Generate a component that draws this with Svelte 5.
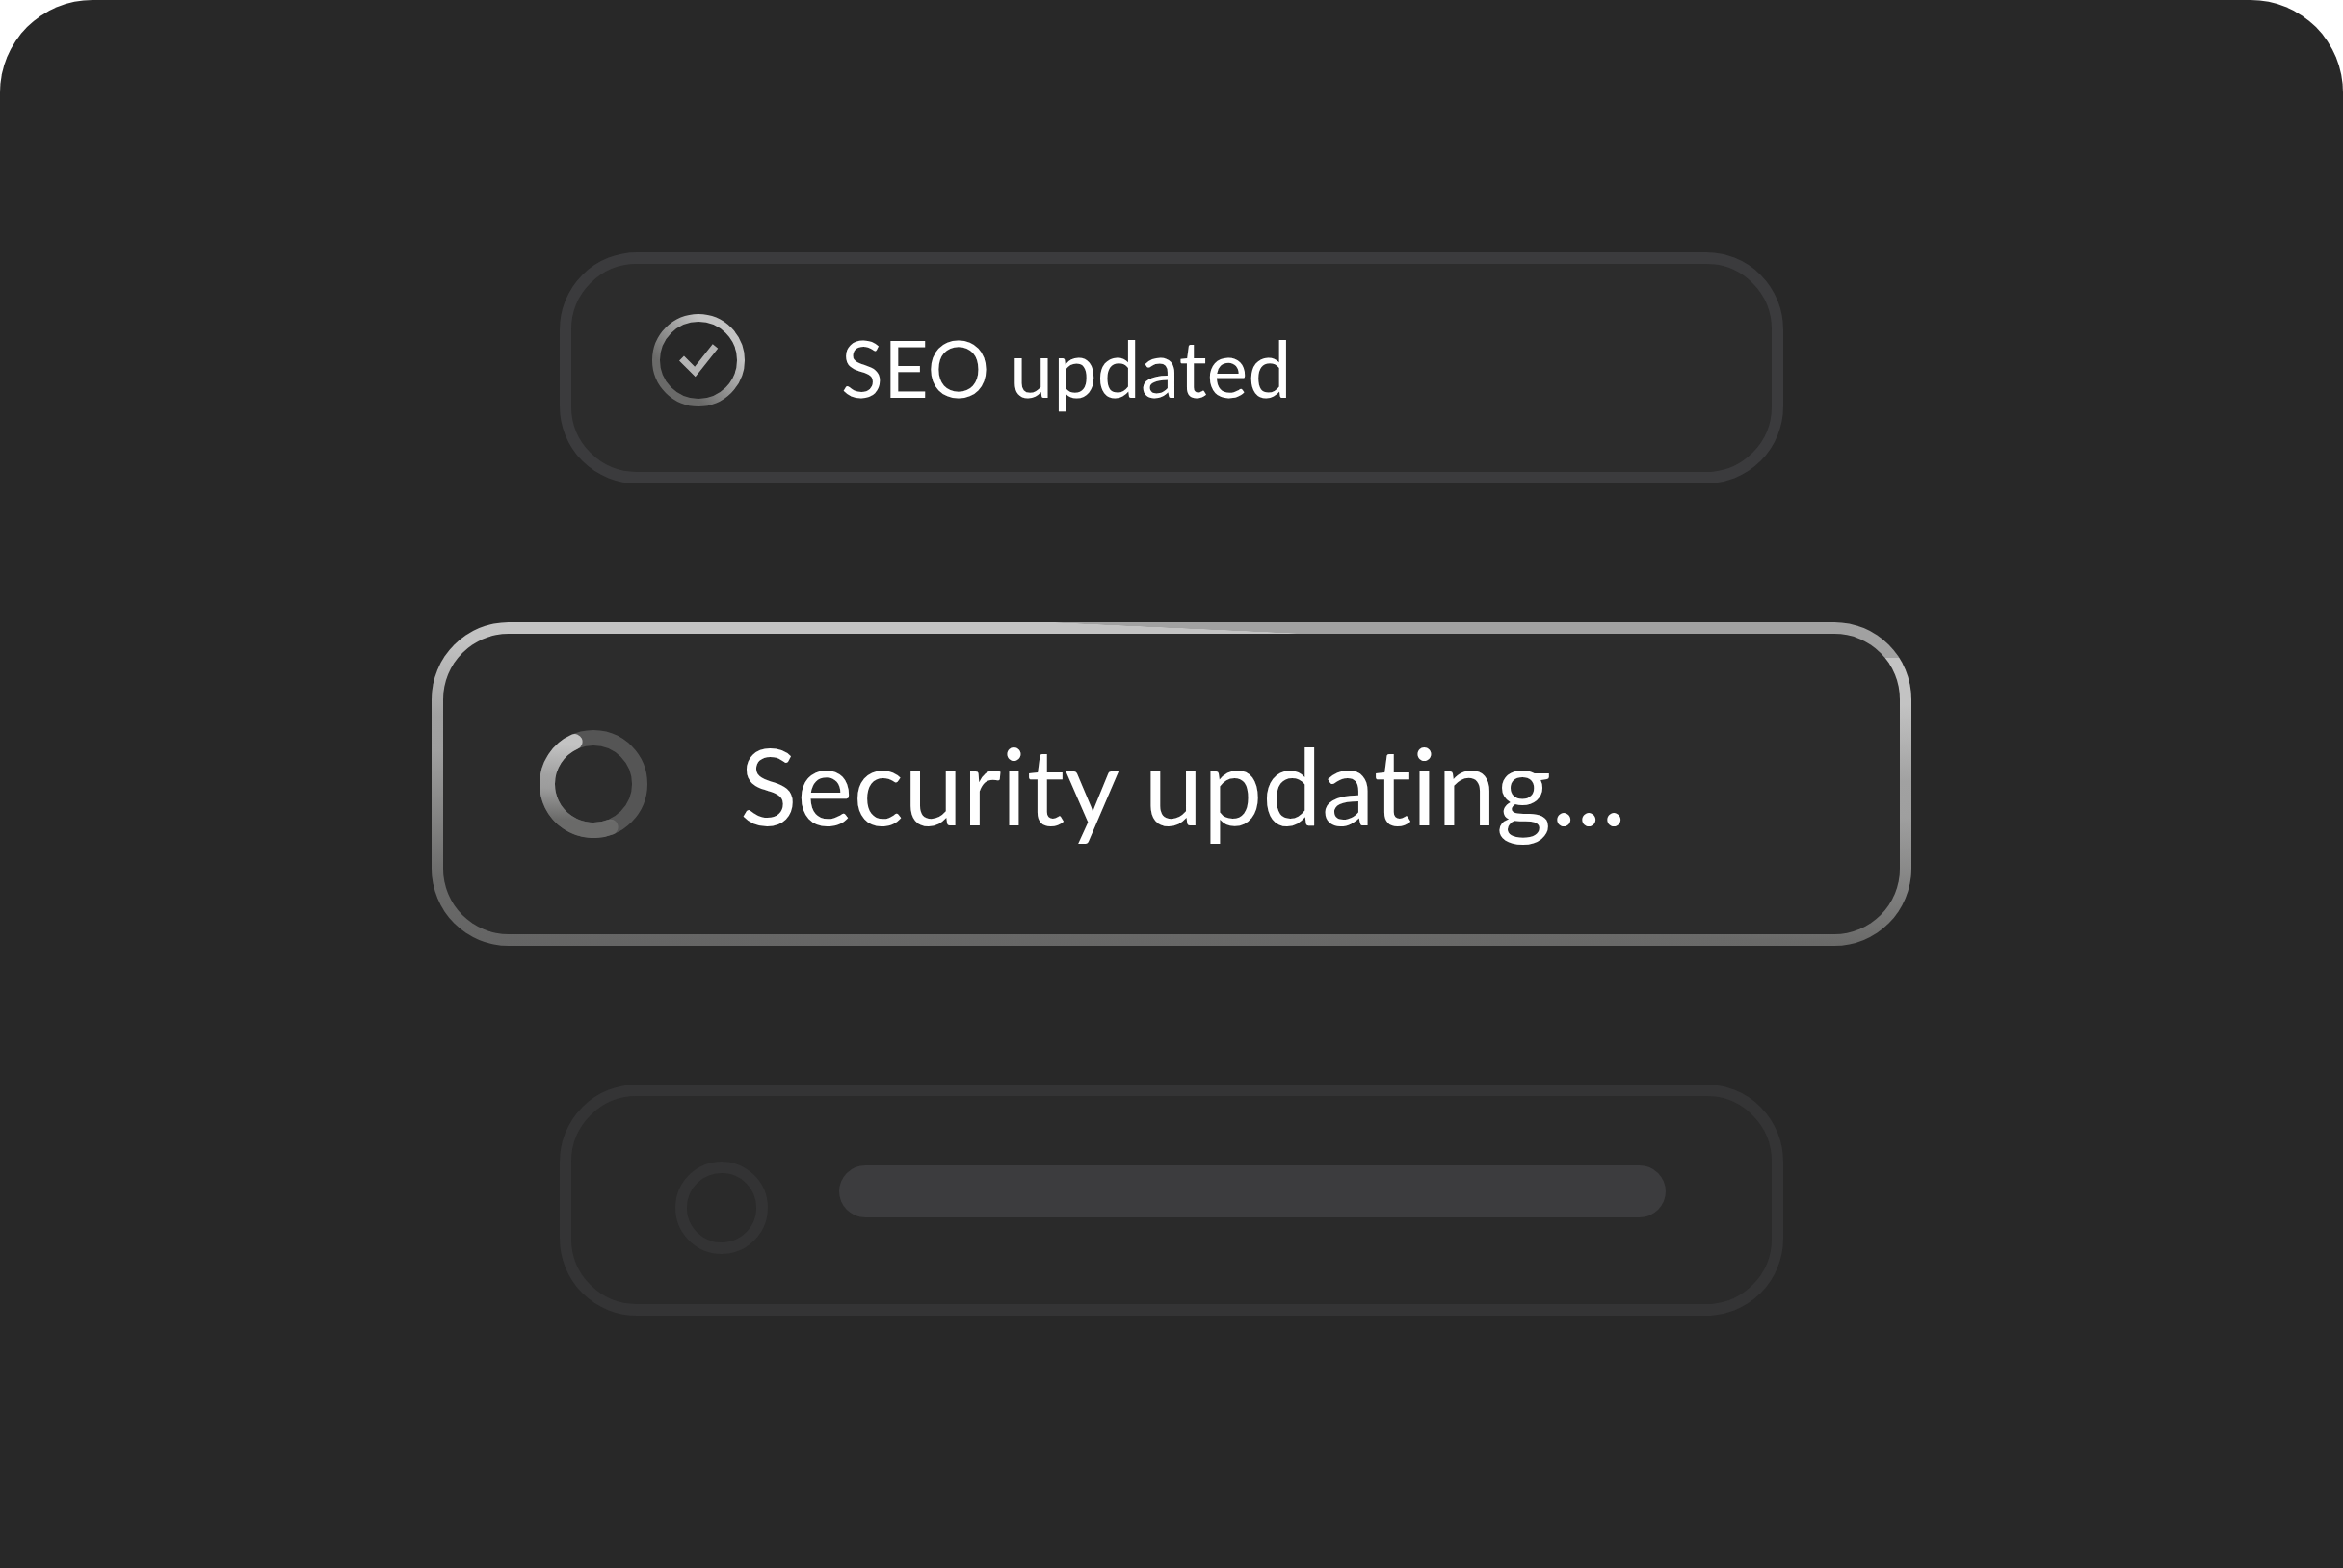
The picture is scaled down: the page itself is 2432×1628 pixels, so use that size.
<script lang="ts">
  type Status = 'done' | 'running' | 'pending'

  interface Task {
    label: string
    status: Status
  }

  export let tasks: Task[] = [
    { label: 'SEO updated', status: 'done' },
    { label: 'Security updating...', status: 'running' },
    { label: '', status: 'pending' }
  ]
</script>

<main class="panel">
  <ul class="tasks">
    {#each tasks as task}
      <li class="task {task.status}">
        {#if task.status === 'done'}
          <svg class="icon" viewBox="0 0 96 96" aria-hidden="true">
            <defs>
              <linearGradient id="done-ring" x1="0.1" y1="0.9" x2="0.9" y2="0.1">
                <stop offset="0.2" stop-color="#6a6a69" />
                <stop offset="0.82" stop-color="#c3c3c3" />
              </linearGradient>
            </defs>
            <circle cx="48" cy="48" r="44" fill="#282828" stroke="url(#done-ring)" stroke-width="8" />
            <path d="M30.5 46 L44.5 60 L65.5 33.5" fill="none" stroke="#b4b4b4" stroke-width="7" />
          </svg>
        {:else if task.status === 'running'}
          <svg class="icon" viewBox="0 0 112 112" aria-hidden="true">
            <defs>
              <linearGradient id="spinner-arc" gradientUnits="userSpaceOnUse" x1="52" y1="8" x2="48" y2="104">
                <stop offset="0.08" stop-color="#c3c3c3" />
                <stop offset="0.42" stop-color="#a1a1a1" />
                <stop offset="0.56" stop-color="#9c9c9c" />
                <stop offset="0.9" stop-color="#6a6a69" />
              </linearGradient>
            </defs>
            <circle cx="56" cy="56" r="48" fill="none" stroke="#555555" stroke-width="16" />
            <path
              d="M36.6 12.1 A48 48 0 0 0 8 56 A48 48 0 0 0 73.6 100.7"
              fill="none"
              stroke="url(#spinner-arc)"
              stroke-width="16"
              stroke-linecap="round"
            />
          </svg>
        {:else}
          <span class="empty-ring"></span>
        {/if}

        {#if task.label}
          <span class="label">{task.label}</span>
        {:else}
          <span class="placeholder"></span>
        {/if}
      </li>
    {/each}
  </ul>
</main>

<style>
  :global(body) {
    margin: 0;
    background: #ffffff;
  }

  .panel {
    box-sizing: border-box;
    display: flex;
    flex-direction: column;
    justify-content: center;
    min-height: 100vh;
    background: #282828;
    border-radius: 96px 96px 0 0;
  }

  .tasks {
    display: flex;
    flex-direction: column;
    align-items: center;
    gap: 144px;
    margin: 0;
    padding: 0;
    list-style: none;
  }

  .task {
    box-sizing: border-box;
    display: flex;
    align-items: center;
    width: 53%;
    max-width: 1270px;
    min-height: 240px;
    border: 12px solid #3b3b3d;
    border-radius: 80px;
    background: #2c2c2c;
    color: #ffffff;
    font-family: Lato, 'Open Sans', sans-serif;
    font-size: 81px;
    font-variant-ligatures: none;
  }

  .done {
    gap: 100px;
    padding: 0 84px;
  }

  .running {
    gap: 96px;
    width: 64%;
    max-width: 1536px;
    min-height: 336px;
    padding: 0 100px;
    border-color: transparent;
    background:
      linear-gradient(#2c2c2c, #2c2c2c) padding-box,
      linear-gradient(2.6deg, transparent 47.5%, #a1a1a1 48%) top right / 58.5% 37px no-repeat border-box,
      linear-gradient(182.6deg, #c3c3c3 21%, #a1a1a1 41%, #9f9f9f 50%, #6a6a69 83%, #646464 100%) border-box;
    font-size: 110px;
  }

  .pending {
    gap: 74px;
    padding: 0 110px 0 108px;
    border-color: #343435;
    background: #2a2a2a;
  }

  .icon {
    flex: none;
    width: 112px;
    height: 112px;
  }

  .done .icon {
    width: 96px;
    height: 96px;
    margin-bottom: 16px;
  }

  .label {
    line-height: 120%;
    white-space: nowrap;
  }

  .empty-ring {
    box-sizing: border-box;
    flex: none;
    width: 96px;
    height: 96px;
    margin-top: 16px;
    border: 12px solid #333334;
    border-radius: 50%;
  }

  .placeholder {
    flex: 1;
    height: 54px;
    margin-bottom: 18px;
    border-radius: 27px;
    background: #3c3c3e;
  }
</style>
